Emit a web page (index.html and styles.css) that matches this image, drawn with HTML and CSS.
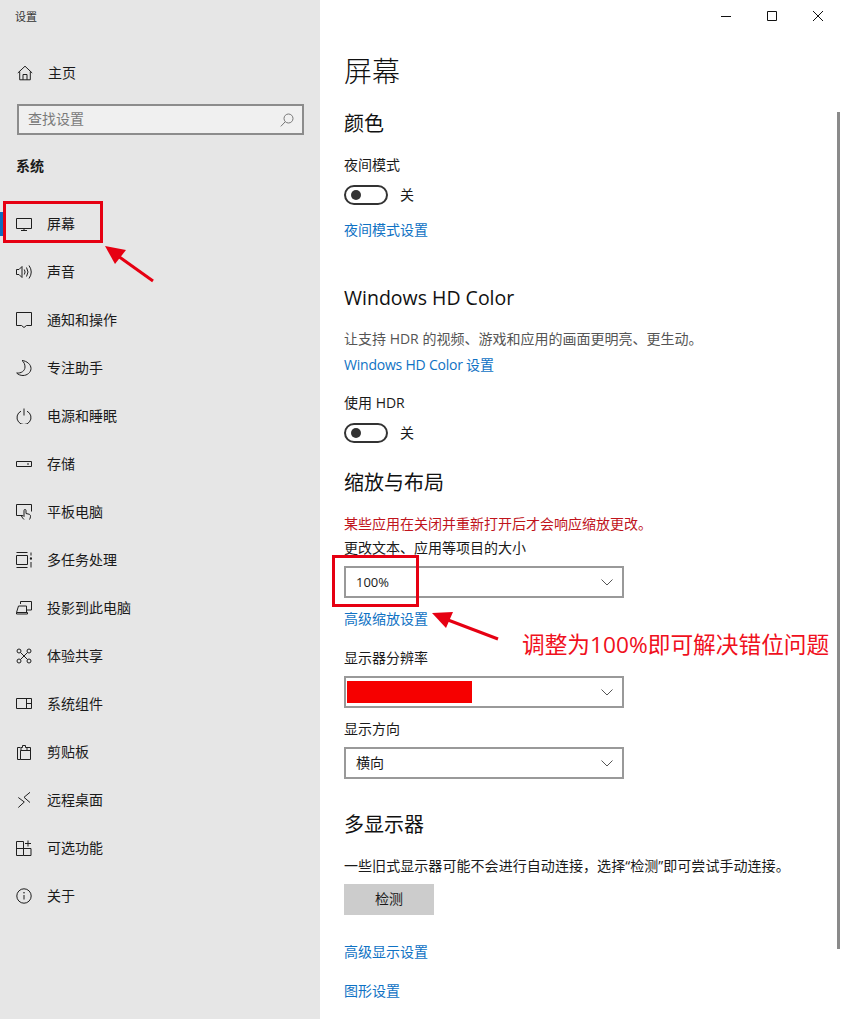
FILE: index.html
```html
<!DOCTYPE html>
<html lang="zh-CN">
<head>
<meta charset="utf-8">
<title>设置</title>
<link rel="stylesheet" href="styles.css">
</head>
<body>
<div class="window">
  <aside class="sidebar">
    <div class="app-title">设置</div>
    <div class="home"><svg class="ico" viewBox="0 0 16 16"><path d="M.8 8 8 1.200 15.200 8M2.700 6.500v8.300h10.600V6.500M6 14.800V9.500h4v5.300"/></svg><span>主页</span></div>
    <div class="search"><span>查找设置</span><svg class="search-ico" viewBox="0 0 14 14"><circle cx="8.500" cy="5.500" r="4.500"/><path d="M5.200 8.800.8 13.400"/></svg></div>
    <div class="group">系统</div>
    <nav class="nav">
      <div class="item active"><svg class="ico" viewBox="0 0 16 16"><path d="M.5 2.500h15v10H.5zM5 14.500h6M8 12.500v2"/></svg><span>屏幕</span></div>
      <div class="item"><svg class="ico" viewBox="0 0 16 16"><path d="M.5 5.500h2.500l3-3v11l-3-3H.5zM8.300 5.500q1.600 2.500 0 5M10.500 3.500q3 4.500 0 9M13 1.500q4.500 6.500 0 13"/></svg><span>声音</span></div>
      <div class="item"><svg class="ico" viewBox="0 0 16 16"><path d="M.5 .5h15v13h-5L8 15.500 5.500 13.500h-5z"/></svg><span>通知和操作</span></div>
      <div class="item"><svg class="ico" viewBox="0 0 16 16"><path d="M6 .5C11 1 15 4.500 15 8.500C15 12.500 11 15.500 7 15.500C4.500 15.500 2 14.500 .7 13C5 13.500 9 11 9 7C9 4.500 8 2 6 .5z"/></svg><span>专注助手</span></div>
      <div class="item"><svg class="ico" viewBox="0 0 16 16"><path d="M5 3.200a7 7 0 1 0 6 0M8 .5v7"/></svg><span>电源和睡眠</span></div>
      <div class="item"><svg class="ico" viewBox="0 0 16 16"><path d="M.5 5.500h15v5H.5zM11 8h2"/></svg><span>存储</span></div>
      <div class="item"><svg class="ico" viewBox="0 0 16 16"><path d="M6 11.500H.5v-11h15v7M8 15.500c-1-1-2-2-2.500-3.500l1.500-.5 1 1V6.500a1 1 0 0 1 2 0v3l3 .7c1 .3 1.500 1 1.500 2 0 1.500-.5 2.500-1 3.300"/></svg><span>平板电脑</span></div>
      <div class="item"><svg class="ico" viewBox="0 0 16 16"><path d="M.5 .5h11M.5 15.500h11M.5 3.500v9M11.500 3.500v9M.5 3.500h11M.5 12.500h11M15 .5v3M15 10v5.500"/><circle class="dot" cx="15" cy="6.500" r="1.200"/></svg><span>多任务处理</span></div>
      <div class="item"><svg class="ico" viewBox="0 0 16 16"><path d="M4.500 4V1.500h11v8.500H11M.5 12.500l2-6.500h8v6.500M.5 12.500v1.500h11v-1.500z"/></svg><span>投影到此电脑</span></div>
      <div class="item"><svg class="ico" viewBox="0 0 16 16"><circle cx="3" cy="3" r="2"/><circle cx="13" cy="3" r="2"/><circle cx="3" cy="13" r="2"/><circle cx="13" cy="13" r="2"/><path d="M4.500 4.500l7 7M11.500 4.500l-7 7"/></svg><span>体验共享</span></div>
      <div class="item"><svg class="ico" viewBox="0 0 16 16"><path d="M.5 2.500h15v10H.5zM10.500 2.500v10M10.500 7.500h5"/></svg><span>系统组件</span></div>
      <div class="item"><svg class="ico" viewBox="0 0 16 16"><path d="M4.500 15.500H1.500V3.500h3M11 3.500h3.500v4M4.500 6.500h10v9h-10zM5 3.500h1.500V1.500h3v2h1.500v3H5z"/></svg><span>剪贴板</span></div>
      <div class="item"><svg class="ico" viewBox="0 0 16 16"><path d="M2.300 5.500 8.300 10 2.300 15.500M14 .3 8 5.300 14 10.500"/></svg><span>远程桌面</span></div>
      <div class="item"><svg class="ico" viewBox="0 0 16 16"><path d="M.5 1.500h7v14h-7zM.5 8.500h14.500v7H7.500M12 .5v6M9 3.500h6"/></svg><span>可选功能</span></div>
      <div class="item"><svg class="ico" viewBox="0 0 16 16"><circle cx="8" cy="8" r="7.200"/><path d="M8 7v4.500"/><circle class="dot" cx="8" cy="4.700" r=".8"/></svg><span>关于</span></div>
    </nav>
  </aside>

  <main class="main">
    <div class="controls">
      <svg class="ctl" viewBox="0 0 12 12"><path d="M1 6.500h10"/></svg>
      <svg class="ctl" viewBox="0 0 12 12"><path d="M1.500 1.500h9v9h-9z"/></svg>
      <svg class="ctl" viewBox="0 0 12 12"><path d="M1 1l10 10M11 1L1 11"/></svg>
    </div>
    <h1 class="page-title">屏幕</h1>

    <h2 class="section s-color">颜色</h2>
    <div class="line m18">夜间模式</div>
    <div class="toggle-row m10"><span class="toggle"><i></i></span><span class="state">关</span></div>
    <a class="link m15">夜间模式设置</a>

    <h2 class="section s-hd">Windows HD Color</h2>
    <div class="line m17 soft">让支持 HDR 的视频、游戏和应用的画面更明亮、更生动。</div>
    <a class="link m6 tight">Windows HD Color 设置</a>
    <div class="line m18">使用 HDR</div>
    <div class="toggle-row m10"><span class="toggle"><i></i></span><span class="state">关</span></div>

    <h2 class="section s-scale">缩放与布局</h2>
    <div class="line m18 warn">某些应用在关闭并重新打开后才会响应缩放更改。</div>
    <div class="line m4">更改文本、应用等项目的大小</div>
    <div class="select m8"><span>100%</span><svg class="chev" viewBox="0 0 12 7"><path d="M.5 .5 6 6l5.500-5.500"/></svg></div>
    <a class="link m11">高级缩放设置</a>
    <div class="line m19">显示器分辨率</div>
    <div class="select redacted m8"><b class="mask"></b><svg class="chev" viewBox="0 0 12 7"><path d="M.5 .5 6 6l5.500-5.500"/></svg></div>
    <div class="line m11">显示方向</div>
    <div class="select m8"><span class="cjk-value">横向</span><svg class="chev" viewBox="0 0 12 7"><path d="M.5 .5 6 6l5.500-5.500"/></svg></div>

    <h2 class="section s-multi">多显示器</h2>
    <div class="line m18 wide">一些旧式显示器可能不会进行自动连接，选择“检测”即可尝试手动连接。</div>
    <div class="button m8">检测</div>
    <a class="link m27">高级显示设置</a>
    <a class="link m19">图形设置</a>
  </main>

  <div class="scrollbar"></div>

  <div class="mark mark-nav"></div>
  <div class="mark mark-select"></div>
  <svg class="arrows" viewBox="0 0 841 1019">
    <path d="M153 281 118 256"/>
    <path class="head" d="M105 246 126 250 115 264z"/>
    <path d="M498 639 448 620"/>
    <path class="head" d="M432 613 453 612 446 628z"/>
  </svg>
  <div class="callout">调整为100%即可解决错位问题</div>
</div>
</body>
</html>
```
FILE: styles.css
```css
* { box-sizing: border-box; }
html, body { margin: 0; padding: 0; background: #fff; }
body {
  font-family: "Open Sans", "Noto Sans CJK SC", sans-serif;
  font-size: 14px;
  color: #1a1a1a;
}
.window {
  position: relative;
  display: flex;
  width: 841px;
  height: 1019px;
  overflow: hidden;
}

/* Sidebar */
.sidebar {
  flex: 0 0 320px;
  background: #e6e6e6;
  padding-top: 7px;
}
.app-title {
  height: 20px;
  line-height: 20px;
  font-size: 11px;
  padding-left: 15px;
  color: #333;
}
.ico {
  flex: none;
  width: 16px;
  height: 16px;
  fill: none;
  stroke: #1f1f1f;
  stroke-width: 1;
}
.ico .dot { fill: #1f1f1f; stroke: none; }
.home {
  display: flex;
  align-items: center;
  gap: 15px;
  height: 48px;
  margin-top: 22px;
  padding-left: 17px;
}
.home span { padding-bottom: 2px; }
.search {
  display: flex;
  align-items: center;
  justify-content: space-between;
  width: 287px;
  height: 31px;
  margin: 7px 0 0 17px;
  padding: 0 8px 0 9px;
  border: 2px solid #8c8c8c;
  background: #f0f0f0;
  color: #7a7a7a;
}
.search span { padding-bottom: 4px; }
.search-ico {
  width: 14px;
  height: 14px;
  fill: none;
  stroke: #777;
  stroke-width: 1;
}
.group {
  height: 20px;
  line-height: 20px;
  margin: 21px 0 0 16px;
  font-weight: 700;
  font-size: 14px;
}
.nav { margin-top: 24px; }
.item {
  position: relative;
  display: flex;
  align-items: center;
  gap: 15px;
  height: 48px;
  padding-left: 16px;
}
.item span { padding-bottom: 2px; }
.item.active::before {
  content: "";
  position: absolute;
  left: 0;
  top: 12px;
  width: 3px;
  height: 24px;
  background: #0f6cbd;
}

/* Main */
.main {
  flex: 1;
  min-width: 0;
  padding-left: 24px;
  background: #fff;
}
.controls {
  display: flex;
  justify-content: flex-end;
  gap: 34px;
  height: 32px;
  padding: 10px 17px 0 0;
}
.ctl {
  width: 12px;
  height: 12px;
  fill: none;
  stroke: #111;
  stroke-width: 1;
}
.page-title {
  margin: 19px 0 0;
  height: 40px;
  line-height: 40px;
  font-size: 28px;
  font-weight: 300;
  color: #111;
}
.section {
  margin: 0;
  height: 28px;
  line-height: 29px;
  font-size: 20px;
  font-weight: 400;
  color: #111;
}
.s-color { margin-top: 18px; }
.s-hd { margin-top: 44px; font-size: 19.5px; line-height: 28px; }
.s-scale { margin-top: 25px; }
.s-multi { margin-top: 31px; }

.line, .link {
  display: block;
  height: 20px;
  line-height: 20px;
  font-size: 14px;
  white-space: nowrap;
}
.soft { color: #555; }
.warn { color: #c0141c; }
.link { color: #0f72c4; }
.tight { letter-spacing: -.22px; }
.wide { letter-spacing: .06px; }

.toggle-row {
  display: flex;
  align-items: center;
  gap: 12px;
  height: 20px;
  font-size: 14px;
}
.state { padding-bottom: 2px; }
.toggle {
  display: flex;
  align-items: center;
  width: 44px;
  height: 20px;
  padding-left: 5px;
  border: 2px solid #333;
  border-radius: 10px;
}
.toggle i {
  width: 10px;
  height: 10px;
  border-radius: 50%;
  background: #333;
}

.select {
  display: flex;
  align-items: center;
  justify-content: space-between;
  width: 280px;
  height: 32px;
  padding: 0 9px 0 10px;
  border: 2px solid #999;
  background: #fff;
  font-size: 13px;
}
.cjk-value { font-size: 14px; padding-bottom: 3px; }
.redacted { padding-left: 1px; }
.mask {
  display: block;
  width: 125px;
  height: 22px;
  background: #f60000;
}
.chev {
  width: 12px;
  height: 7px;
  fill: none;
  stroke: #555;
  stroke-width: 1;
}
.button {
  width: 90px;
  height: 31px;
  line-height: 29px;
  text-align: center;
  background: #cccccc;
  font-size: 14px;
}

.m4 { margin-top: 4px; }
.m6 { margin-top: 6px; }
.m8 { margin-top: 8px; }
.m10 { margin-top: 10px; }
.m11 { margin-top: 11px; }
.m15 { margin-top: 15px; }
.m17 { margin-top: 17px; }
.m18 { margin-top: 18px; }
.m19 { margin-top: 19px; }
.m27 { margin-top: 27px; }

/* Overlays */
.scrollbar {
  position: absolute;
  left: 837px;
  top: 112px;
  width: 3px;
  height: 837px;
  background: #8a8a8a;
}
.mark {
  position: absolute;
  border: 3px solid #e60012;
}
.mark-nav { left: 3px; top: 201px; width: 100px; height: 42px; }
.mark-select { left: 332px; top: 555px; width: 87px; height: 52px; }
.arrows {
  position: absolute;
  left: 0;
  top: 0;
  width: 841px;
  height: 1019px;
  fill: none;
  stroke: #e60012;
  stroke-width: 3;
  pointer-events: none;
}
.arrows .head { fill: #e60012; stroke: none; }
.callout {
  position: absolute;
  left: 522px;
  top: 629px;
  height: 32px;
  line-height: 32px;
  font-size: 22.7px;
  color: #f01020;
  white-space: nowrap;
}
```
